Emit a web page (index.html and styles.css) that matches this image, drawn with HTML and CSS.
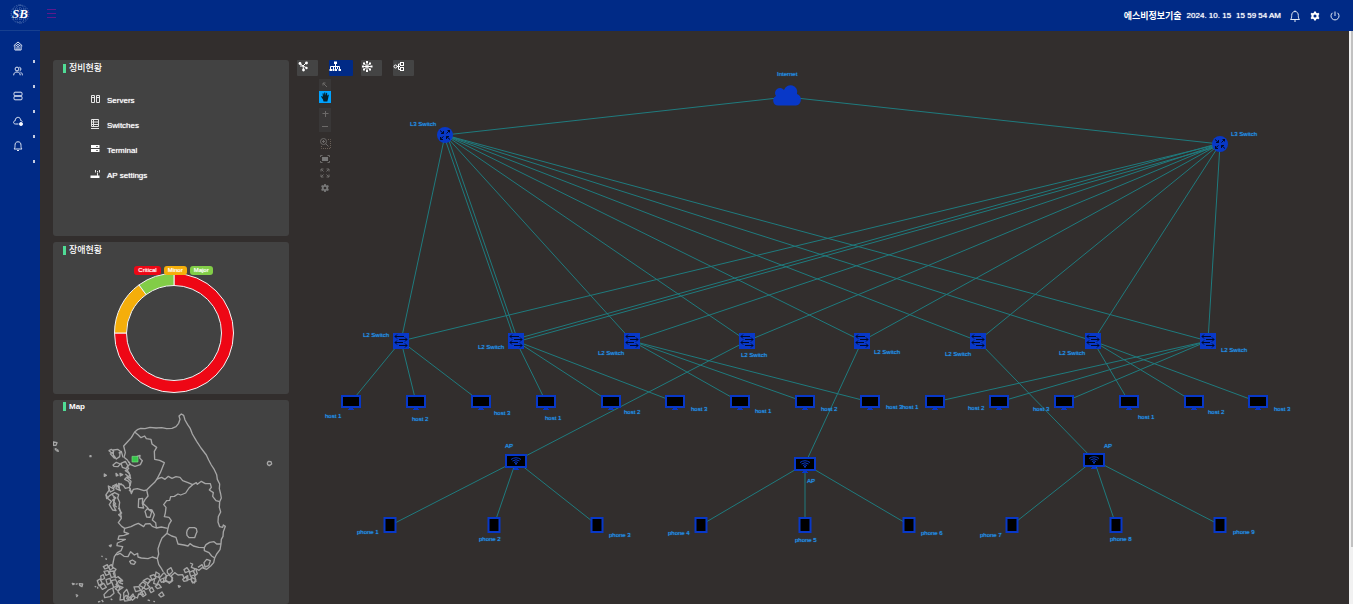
FILE: index.html
```html
<!DOCTYPE html>
<html lang="ko">
<head>
<meta charset="utf-8">
<title>Network topology</title>
<link rel="stylesheet" href="styles.css">
</head>
<body>
<header class="topbar">
  <a class="logo" href="#" aria-label="SB">
    <svg viewBox="0 0 20 20" class="logo-mark">
      <g class="globe"><circle cx="10" cy="10" r="9"/><ellipse cx="10" cy="10" rx="5" ry="9"/><path d="M10 1V19M1 10H19M3 5H17M3 15H17"/></g>
      <text x="10" y="14" text-anchor="middle">SB</text>
    </svg>
  </a>
  <button class="burger" aria-label="Menu"><svg viewBox="0 0 9 9"><path d="M0 .5H9M0 4.500H9M0 8.500H9"/></svg></button>
  <div class="status">
    <strong class="company">에스비정보기술</strong>
    <span>2024. 10. 15</span>
    <span>15 59 54 AM</span>
    <button class="top-icon" aria-label="Alerts"><svg class="line" viewBox="0 0 12 12"><path d="M1.500 9.500H10.500C9.500 8.500 9.300 7.500 9.300 5.500C9.300 3 8 1.500 6 1.500S2.700 3 2.700 5.500C2.700 7.500 2.500 8.500 1.500 9.500M5 11H7M6 .5V1.500"/></svg></button>
    <button class="top-icon" aria-label="Settings"><svg viewBox="-1 0 14 12"><use href="#gear"/></svg></button>
    <button class="top-icon" aria-label="Power"><svg class="line" viewBox="0 0 12 12"><path d="M6 1.500V6M3.500 2.800A4 4 0 1 0 8.500 2.800"/></svg></button>
  </div>
</header>
<div class="body">
  <nav class="side">
    <a href="#" aria-label="Home"><svg viewBox="0 0 10 10"><path d="M.7 4.800L5 1L9.300 4.800M1.900 4.200V9H8.100V4.200M4 9V6.500A1 1 0 0 1 6 6.500V9M3 5L5 3.300L7 5"/></svg></a>
    <a href="#" aria-label="Users"><svg viewBox="0 0 10 10"><circle cx="4" cy="3" r="1.900"/><path d="M.7 9.300C.7 7 2 6 4 6S7.200 7 7.200 9.300M6.300 1.200A1.900 1.900 0 0 1 6.600 4.900M7.500 6.200C8.800 6.700 9.400 7.800 9.400 9.300"/></svg></a>
    <a href="#" aria-label="Devices"><svg viewBox="0 0 10 10"><rect x="1" y="1.200" width="8" height="3.600" rx="1"/><rect x="1" y="5.200" width="8" height="3.600" rx="1"/></svg></a>
    <a href="#" aria-label="Cloud"><svg viewBox="0 0 10 10"><path d="M5.500 8H2.500C0 8 0 5 2.200 4.700C2.200 0 8 .5 7.700 4.500C8.500 4.600 9.200 5 9.400 5.600"/><circle class="solid" cx="8" cy="8" r="1.600"/></svg></a>
    <a href="#" aria-label="Alarms"><svg viewBox="0 0 10 10"><path d="M1 8H9C8 7 8 6 8 4.500C8 2 7 .8 5 .8S2 2 2 4.500C2 6 2 7 1 8M4 9.500H6"/></svg></a>
  </nav>
  <main class="main">
    <div class="panels">
      <section class="card card-menu">
        <h2>정비현황</h2>
        <ul class="menu">
          <li><a href="#"><svg viewBox="0 0 10 10"><path d="M1.500 1.500H4.500V8.500H1.500ZM6.500 1.500H9.500V8.500H6.500ZM1.500 3.500H4M6.500 3.500H9"/></svg>Servers</a></li>
          <li><a href="#"><svg viewBox="0 0 10 10"><path d="M1.500 .5H8.500V7.500H1.500ZM1.500 3H8.500M1.500 5.500H8.500M1 9.500H9M3.500 1V8"/></svg>Switches</a></li>
          <li><a href="#"><svg viewBox="0 0 10 10"><path class="solid" d="M1 1H9.500V4H1ZM1 5H9.500V8H1Z"/><path class="cut" d="M6 2.500H8M6 6.500H8"/></svg>Terminal</a></li>
          <li><a href="#"><svg viewBox="0 0 10 10"><path class="solid" d="M.5 6.500H9.500V9H.5Z"/><path d="M7.500 7V3.500M5.500 1V3.500M9.500 1V3.500M7 2.500H8"/></svg>AP settings</a></li>
        </ul>
      </section>
      <section class="card card-fault">
        <h2>장애현황</h2>
        <div class="chart">
          <ul class="legend"><li class="critical">Critical</li><li class="minor">Minor</li><li class="major">Major</li></ul>
          <svg class="donut" viewBox="-60 -60 120 120">
            <path class="critical" d="M0 -59.500A59.500 59.500 0 1 1 -59.500 0H-47.500A47.500 47.500 0 1 0 0 -47.500Z"/>
            <path class="minor" d="M-59.500 0A59.500 59.500 0 0 1 -35 -48.100L-27.900 -38.400A47.500 47.500 0 0 0 -47.500 0Z"/>
            <path class="major" d="M-35 -48.100A59.500 59.500 0 0 1 0 -59.500V-47.500A47.500 47.500 0 0 0 -27.900 -38.400Z"/>
          </svg>
        </div>
      </section>
      <section class="card card-map">
        <h2>Map</h2>
        <svg class="map" viewBox="9 6 708 612" aria-label="Map">
          <path d="M254 102L262 95L272 91L285 92L300 88L318 90L335 89L350 92L366 91L378 86L386 76L390 64L387 54L394 48L401 52L405 66L413 80L421 92L427 108L440 130L453 150L469 171L476 186L484 201L493 215L500 230L502 244L509 258L508 272L512 288L514 300L509 311L508 328L512 342L505 356L504 372L509 386L518 388L520 381L526 385L520 401L519 415L514 424L513 438L510 455L500 468L494 480L491 494L482 504L470 514L456 509L447 517L437 512L442 527L434 534L438 550L428 555L422 543L414 546L413 533L402 540L398 530L384 531L374 524L364 533L368 548L358 556L350 548L340 553L342 540L328 546L321 560L311 556L314 542L300 548L292 560L300 568L288 574L279 568L274 580L280 590L266 588L262 600L248 594L240 607L230 602L236 588L230 574L221 585L222 604L210 606L212 590L204 582L210 568L198 560L207 548L218 549L205 536L196 540L190 526L198 514L187 507L190 490L193 476L202 464L213 458L218 446L201 443L202 435L216 429L226 424L204 424L207 414L222 412L236 407L222 402L224 391L215 385L205 374L214 361L211 340L207 327L209 313L203 300L206 290L194 284L180 292L170 302L168 290L178 276L175 264L190 272L196 262L208 269L206 256L220 262L226 271L238 268L240 260L236 250L224 244L232 236L242 241L238 226L226 218L236 212L232 206L240 198L232 186L222 178L226 164L221 144L232 132L244 119Z"/>
          <path d="M254 102L264 110L273 119L284 114L289 122L303 124L306 138L320 148L313 160L314 184L329 187L343 194L337 209L331 224L321 243L314 253L302 264L290 276L282 278L262 272L250 274L244 287L240 270"/>
          <path d="M321 243L335 238L345 244L355 235L366 241L378 236L390 238L398 248L414 254L428 260L439 254L442 259L454 250L466 257L481 257L484 268L478 276L490 284L488 295L498 308L509 311"/>
          <path d="M428 260L417 270L407 285L392 291L384 288L373 295L362 296L359 307L350 308L341 320L348 328L346 345L343 356L357 358L364 368L357 379L354 391L351 406L365 414L378 418L384 438L402 441L414 444L420 437L430 444L446 448L463 449L468 440L479 433L492 431L500 438L513 438M463 449L463 458L477 464L485 474L494 480"/>
          <path d="M290 276L294 294L285 305L279 316L290 326L297 334L306 336L313 350L307 366L317 374L319 390L307 385L300 377L286 378L281 386L265 376L255 380L243 386L224 391M266 303L278 301L277 316L281 330L265 328ZM285 340L292 332L305 341L300 358L290 357ZM319 390L334 387L353 391"/>
          <path d="M351 406L336 420L330 434L324 452L326 468L322 482L326 499L334 511L340 522M322 482L307 477L294 482L274 480L264 477L263 466L253 471L242 461L234 476L222 475L210 466L202 470L195 470"/>
          <path d="M235 190L242 200L255 205L271 200L277 188L269 180L270 172L260 176M410 404L412 396L418 389L433 389L439 392L441 401L438 408L434 419L417 419L411 412ZM239 490L247 486L257 492L252 499L243 497ZM652 195L655 190L663 191L665 198L658 203L653 200Z"/>
          <path d="M177 158L184 154L191 160L186 166ZM190 156L203 154L211 160L209 176L199 183L190 171ZM189 201L199 193L211 198L204 206L192 205ZM213 196L226 190L234 204L228 212L217 208ZM180 166L194 182M206 166L214 160L219 178M198 226L204 232L199 234ZM210 226L218 230L211 234ZM163 228L169 232L163 235ZM10 132L21 134L18 142L11 142ZM14 154L18 152L18 158M19 158L25 160L22 154M120 173H123V176H120Z"/>
          <path d="M168 290L174 302L184 310L178 320L188 336L198 338L190 322L197 318L188 306L198 300L187 292M175 268L181 282L192 276L188 264L200 258L198 272L211 278L203 262L216 258M186 286L194 304L190 318L200 328M205 330L215 345L206 350L214 358M232 216L240 232L232 240L243 250L240 264M226 228L236 236M238 268L244 282L237 276"/>
          <path d="M178 443L184 441L182 446ZM154 474L158 476M166 482L171 484M160 506L172 500L175 509L165 513ZM176 505L184 500L190 510L180 516ZM162 520L174 518L178 528L168 532ZM178 520L193 519L196 535L184 539ZM152 534L160 530L164 541L154 546ZM142 548L150 543L157 556L147 563ZM150 564L161 556L169 568L157 574ZM168 545L180 541L183 554L172 560ZM184 548L197 545L205 562L191 568ZM175 576L188 570L192 586L180 596L164 599L162 590ZM196 572L207 564L219 568L204 578ZM205 538L216 546L208 554L219 558M134 565L139 567M143 566V572M67 556L73 558L69 560ZM77 559L83 557M88 557L98 558L96 566L89 562ZM77 590L83 592L79 597M144 612L151 610M155 606L160 612M182 602L187 606"/>
          <path d="M252 567L266 566L272 577L257 581ZM268 562L278 552L287 558L282 570ZM280 548L292 541L302 546L294 556ZM300 534L312 530L318 540L307 546ZM318 522L328 528L326 538L316 534ZM328 540L342 524L350 534L346 548L334 553ZM352 516L363 509L368 520L359 530L352 524ZM345 538L356 530L368 540L362 552L349 551ZM270 585L282 578L288 590L279 596ZM298 575L306 568L312 579L303 584ZM316 565L326 558L334 568L322 572ZM326 590L336 582L342 592L333 597ZM221 600L228 592L238 598L234 608L224 609ZM240 598L249 588L255 600L247 607ZM385 563L391 565L387 568ZM293 606L300 608M310 610L315 611M398 544L409 536L412 548L402 550ZM418 523L429 518L436 530L422 535ZM420 495L428 498L424 508L434 512L430 524M402 515L411 509L418 519L406 524ZM424 538L437 544L433 555L425 550ZM462 494L470 484L481 488L476 503L465 507ZM444 508L456 500L462 512"/>
          <rect class="pin" x="246" y="175" width="18" height="17"/>
        </svg>
      </section>
    </div>
    <section class="stage">
      <svg class="topology" viewBox="297 60 1052 544" aria-label="Topology">
        <defs>
          <path id="gear" d="M5 .8H7L7.400 2.200L8.600 2.800L9.900 2.100L11.200 3.800L10.200 4.900V7.100L11.200 8.200L9.900 9.900L8.600 9.200L7.400 9.800L7 11.200H5L4.600 9.800L3.400 9.200L2.100 9.900L.8 8.200L1.800 7.100V4.900L.8 3.800L2.100 2.100L3.400 2.800L4.600 2.200ZM6 4.200A1.800 1.800 0 1 0 6 7.800A1.800 1.800 0 1 0 6 4.200Z" fill-rule="evenodd"/>
          <g id="l3"><circle class="fill" r="8"/><path class="mark" d="M-5 -4.500L-1.500 -1.500M-1.500 -4V-1.500H-4M1.500 -1.500L5 -5M2.500 -4.500H4.500V-2.500M-5 4.500L-1.500 1.500M-4.500 2V4.500H-2M5 4.500L1.500 1.500M1.500 4V1.500H4"/></g>
          <g id="l2"><rect class="fill" x="-8" y="-8" width="16" height="16"/><path class="mark" d="M-6 -4.500H3M-4 -6.500L-6 -4.500L-4 -2.500M-2 -1.500H6M4 -3.500L6 -1.500L4 .5M-6 1.500H2M-4 -.5L-6 1.500L-4 3.500M-2 4.500H6M4 2.500L6 4.500L4 6.500"/></g>
          <g id="host"><rect class="screen" x="-9" y="-6" width="18" height="11"/><path class="fill" d="M-2 6H2V7H3V8H-3V7H-2Z"/></g>
          <g id="ap"><rect class="screen" x="-10" y="-6" width="20" height="12"/><path class="fill" d="M-2 6H2V8H3V9H-3V8H-2Z"/><path class="wifi" d="M-5 -1.500Q0 -5 5 -1.500M-3.500 0Q0 -2.500 3.500 0M-2 1.500Q0 0 2 1.500"/><circle class="fill" cy="2.800" r="1"/></g>
          <g id="phone"><rect class="screen" x="-5.500" y="-7" width="11" height="14"/></g>
        </defs>
        <path class="links" d="M787 97L445 135M787 97L1220 144M445 135L401 341M444 136L515 341M447 135L518 341M445 135L632 341M445 135L747 341M445 135L862 341M445 135L978 341M445 135L1093 341M445 135L1208 341M1220 144L401 341M1220 143L516 339M1220 146L516 342M1220 144L632 341M1220 144L747 341M1220 144L862 341M1220 144L978 341M1220 144L1093 341M1220 144L1208 341
        M401 341L351 402M401 341L416 402M401 341L481 402M516 341L546 402M516 341L610 402M516 341L675 402M632 341L740 402M632 341L805 402M632 341L870 402M1208 341L935 402M1208 341L999 402M1208 341L1064 402M1093 341L1129 402M1093 341L1194 402M1093 341L1258 402
        M747 341L516 461M862 341L805 464M978 341L1094 460M516 461L391 525M516 461L494 525M516 461L597 525M805 464L701 525M805 464V525M805 464L909 525M1094 460L1012 525M1094 460L1116 525M1094 460L1220 525"/>
        <path class="fill" d="M778 105.500A5 5 0 0 1 776 96A5 5 0 0 1 784 90A6.500 6.500 0 0 1 797 94A6 6 0 0 1 796 105.500Z"/>
        <use href="#l3" x="445" y="135"/><use href="#l3" x="1220" y="144"/>
        <use href="#l2" x="401" y="341"/><use href="#l2" x="516" y="341"/><use href="#l2" x="632" y="341"/><use href="#l2" x="747" y="341"/><use href="#l2" x="862" y="341"/><use href="#l2" x="978" y="341"/><use href="#l2" x="1093" y="341"/><use href="#l2" x="1208" y="341"/>
        <use href="#host" x="351" y="402"/><use href="#host" x="416" y="402"/><use href="#host" x="481" y="402"/><use href="#host" x="546" y="402"/><use href="#host" x="611" y="402"/><use href="#host" x="675" y="402"/><use href="#host" x="740" y="402"/><use href="#host" x="805" y="402"/><use href="#host" x="870" y="402"/><use href="#host" x="935" y="402"/><use href="#host" x="999" y="402"/><use href="#host" x="1064" y="402"/><use href="#host" x="1129" y="402"/><use href="#host" x="1194" y="402"/><use href="#host" x="1258" y="402"/>
        <use href="#ap" x="516" y="461"/><use href="#ap" x="805" y="464"/><use href="#ap" x="1094" y="460"/>
        <use href="#phone" x="390" y="525"/><use href="#phone" x="494" y="525"/><use href="#phone" x="597" y="525"/><use href="#phone" x="701" y="525"/><use href="#phone" x="805" y="525"/><use href="#phone" x="909" y="525"/><use href="#phone" x="1012" y="525"/><use href="#phone" x="1116" y="525"/><use href="#phone" x="1220" y="525"/>
        <g class="labels">
          <text x="777" y="76">Internet</text>
          <text x="410" y="126">L3 Switch</text><text x="1231" y="136">L3 Switch</text>
          <text x="363" y="337">L2 Switch</text><text x="478" y="349">L2 Switch</text><text x="598" y="355">L2 Switch</text><text x="741" y="357">L2 Switch</text><text x="874" y="354">L2 Switch</text><text x="945" y="356">L2 Switch</text><text x="1059" y="355">L2 Switch</text><text x="1221" y="352">L2 Switch</text>
          <text x="325" y="418">host 1</text><text x="412" y="421">host 2</text><text x="494" y="415">host 3</text><text x="545" y="420">host 1</text><text x="624" y="414">host 2</text><text x="691" y="411">host 3</text><text x="755" y="413">host 1</text><text x="821" y="411">host 2</text><text x="886" y="409">host 3</text><text x="902" y="409">host 1</text><text x="968" y="410">host 2</text><text x="1033" y="411">host 3</text><text x="1138" y="419">host 1</text><text x="1208" y="414">host 2</text><text x="1274" y="411">host 3</text>
          <text x="505" y="448">AP</text><text x="807" y="483">AP</text><text x="1104" y="448">AP</text>
          <text x="357" y="534">phone 1</text><text x="479" y="541">phone 2</text><text x="609" y="537">phone 3</text><text x="668" y="535">phone 4</text><text x="795" y="542">phone 5</text><text x="921" y="535">phone 6</text><text x="980" y="537">phone 7</text><text x="1110" y="541">phone 8</text><text x="1233" y="534">phone 9</text>
        </g>
      </svg>
      <div class="tools">
        <div class="layouts">
          <button aria-label="Force layout"><svg viewBox="0 0 12 12"><path d="M3 3.500L6 6L9.500 2.500M6 6L6.500 9.500M6 6L9 7.500M3 6L6 6"/><circle class="solid" cx="3" cy="3.500" r="1.400"/><circle class="solid" cx="9.500" cy="3" r="1.400"/><circle class="solid" cx="6.500" cy="10" r="1.400"/><circle class="solid" cx="9.500" cy="8" r="1.200"/></svg></button>
          <button class="active" aria-label="Tree layout"><svg viewBox="0 0 12 12"><path d="M6.500 3V9M1.500 9V6.500H10.500V9M4.500 6.500V9M8.500 6.500V9"/><path class="solid" d="M5 1.500H8V4H5ZM.5 9H3V11H.5ZM3.500 9H5.500V11H3.500ZM6 9H8V11H6ZM9.500 9H12V11H9.500Z"/></svg></button>
          <button aria-label="Radial layout"><svg viewBox="0 0 12 12"><path d="M6 2V11M1.500 6.500H10.500M3 3.500L9 9.500M9 3.500L3 9.500"/><path class="solid" d="M5 1H7V3H5ZM5 10H7V12H5ZM1 5.500H3V7.500H1ZM9.500 5.500H11.500V7.500H9.500ZM2 2.500H4V4.500H2ZM8 2.500H10V4.500H8ZM2 8.500H4V10.500H2ZM8 8.500H10V10.500H8Z"/></svg></button>
          <button aria-label="Horizontal layout"><svg viewBox="0 0 12 12"><path d="M4 6.500H7M5.500 6.500V4H7M5.500 6.500V9.500H7"/><circle cx="2.500" cy="6.500" r="1.500"/><rect x="7.500" y="2.500" width="3" height="3"/><rect x="7.500" y="7.500" width="3" height="3"/></svg></button>
        </div>
        <div class="modes">
          <button aria-label="Select"><svg viewBox="0 0 12 12"><path d="M4 4L8 8M4 6.500V4H6.500"/></svg></button>
          <button class="pan" aria-label="Pan"><svg viewBox="0 0 12 12"><path d="M4.500 10.500L4 8.500L2 5.500L3 5L4 6L3.500 2.500L4.500 2.200L5 4.500L5.300 1.500H6.300L6.500 4.500L7.300 1.800L8.200 2L8 5L9 3.500L9.800 4L9 8L8.300 10.500Z"/></svg></button>
        </div>
        <div class="zooms">
          <button aria-label="Zoom in"><svg viewBox="0 0 12 12"><path d="M6.500 3V9M3.500 5.500H9.500"/></svg></button>
          <button aria-label="Zoom out"><svg viewBox="0 0 12 12"><path d="M3 6.500H9"/></svg></button>
        </div>
        <div class="views">
          <button aria-label="Zoom to area"><svg viewBox="0 0 12 12"><circle cx="4.500" cy="4.500" r="3"/><path d="M3 4.500H6M4.500 3V6M6.700 6.700L9.500 9.500"/><path class="dash" d="M9 2.500H11.500V11.500H2.500V8"/></svg></button>
          <button aria-label="Fit"><svg viewBox="0 0 12 12"><path d="M1.500 5V3.500H3.500M8.500 3.500H10.500V5M1.500 9V10.500H3.500M8.500 10.500H10.500V9"/><rect class="solid" x="3" y="5" width="6" height="4"/></svg></button>
          <button aria-label="Full screen"><svg viewBox="0 0 12 12"><path d="M2 4.500V2H4.500M2 2L4.500 4.500M7.500 2H10V4.500M10 2L7.500 4.500M2 7.500V10H4.500M2 10L4.500 7.500M10 7.500V10H7.500M10 10L7.500 7.500"/></svg></button>
          <button aria-label="Options"><svg viewBox="-2 -2 16 16"><use class="solid" href="#gear"/></svg></button>
        </div>
      </div>
    </section>
  </main>
  <div class="scroll"><div class="thumb"></div></div>
</div>
</body>
</html>
```
FILE: styles.css
```css
* { box-sizing: border-box; }
body {
  margin: 0;
  height: 100vh;
  overflow: hidden;
  display: flex;
  flex-direction: column;
  background: #322e2d;
  color: #fff;
  font: 8px/10px "Liberation Sans", "Noto Sans CJK KR", sans-serif;
}
button { padding: 0; border: 0; background: none; color: inherit; font: inherit; display: grid; }
a { color: inherit; text-decoration: none; }
ul { margin: 0; padding: 0; list-style: none; }
svg { display: block; }

.topbar { flex: none; height: 31px; display: flex; align-items: center; background: #002a86; }
.logo { width: 40px; height: 31px; display: grid; place-items: center; padding-bottom: 3px; border-bottom: 1px solid #17408f; }
.logo-mark { width: 20px; height: 20px; }
.logo-mark text { font: italic bold 13px "Liberation Serif", serif; fill: #fff; }
.globe { fill: none; stroke: #4c6eb0; stroke-width: 1; stroke-dasharray: 1 1; }
.burger { margin: 0 auto 4px 7px; }
.burger svg { width: 9px; height: 9px; stroke: #5c1a8c; fill: none; }
.status { display: flex; align-items: center; gap: 5px; padding-right: 12px; text-shadow: 0 0 1px #fff; }
.company { font-size: 9px; text-shadow: none; }
.top-icon { margin-left: 3px; }
.top-icon svg { width: 12px; height: 12px; fill: #fff; }
.top-icon .line { fill: none; stroke: #e4eaf6; stroke-width: 1; }

.body { flex: 1; min-height: 0; display: flex; }
.side { flex: none; width: 40px; padding-top: 7px; background: #002a86; }
.side a { height: 25px; display: flex; align-items: flex-start; justify-content: space-between; padding: 3px 5px 0 13px; }
.side a::after { content: ""; align-self: flex-end; width: 2px; height: 3px; background: #c3cce2; }
.side svg { width: 10px; height: 10px; fill: none; stroke: #dfe6f5; stroke-width: 1; }
.side .solid { fill: #fff; }

.main { flex: 1; min-width: 0; display: flex; gap: 8px; padding: 29px 0 0 13px; }
.panels { flex: none; width: 236px; display: flex; flex-direction: column; gap: 6px; }
.card { background: #424242; border-radius: 3px; padding: 4px 10px 0; }
.card h2 {
  margin: 0;
  height: 9px;
  padding-left: 3px;
  border-left: 3px solid #50dc96;
  font: bold 8px/9px "Liberation Sans", "Noto Sans CJK KR", sans-serif;
}
.card:not(.card-map) h2 { font-size: 9px; font-weight: 500; }
.card-menu { min-height: 176px; }
.menu { padding: 15px 0 0 27px; }
.menu a { height: 25px; display: flex; align-items: center; gap: 7px; text-shadow: 0 0 1px #fff; }
.menu svg { width: 10px; height: 10px; margin-bottom: 4px; fill: none; stroke: #e6e6e6; stroke-width: 1; }
.menu .solid { fill: #fff; stroke: none; }
.menu .cut { stroke: #777; }

.card-fault { min-height: 152px; }
.chart { display: flex; flex-direction: column; align-items: center; padding: 11px 0 0 5px; }
.legend { position: relative; display: flex; gap: 3px; margin-bottom: -2px; font-size: 6px; line-height: 9px; }
.legend li { padding: 0 4px; border-radius: 3px; text-shadow: 0 0 1px #fff; }
.legend .critical { background: #ee0715; }
.legend .minor { background: #f5ae0a; }
.legend .major { background: #82cd47; }
.donut { width: 120px; height: 120px; stroke: #f4f4f4; stroke-width: 1; }
.donut .critical { fill: #ee0715; }
.donut .minor { fill: #f5ae0a; }
.donut .major { fill: #82cd47; }

.card-map { display: grid; padding: 0; }
.card-map h2, .map { grid-area: 1 / 1; }
.card-map h2 { margin: 2px 0 0 10px; }
.map { width: 100%; fill: none; stroke: #a6a6a6; stroke-width: 4; stroke-linejoin: round; }
.pin { fill: #37c84b; stroke: #7bdc87; stroke-width: 2; }

.stage { flex: 1; min-width: 0; display: grid; align-items: start; }
.topology, .tools { grid-area: 1 / 1; }
.topology { width: 100%; }
.links { fill: none; stroke: #1f7b7e; stroke-width: 1; }
.fill { fill: #0838c8; }
.screen { fill: #000; stroke: #0838c8; stroke-width: 2; }
.mark { fill: none; stroke: #020a28; stroke-width: 1; }
.wifi { fill: none; stroke: #0838c8; stroke-width: 1; }
.labels { fill: #2196f3; font: 6px "Liberation Sans", sans-serif; stroke: none; text-shadow: 0 0 1px #2196f3; }

.tools { justify-self: start; display: flex; flex-direction: column; }
.layouts { display: grid; grid-template-columns: repeat(4, 32px); justify-items: start; margin-bottom: 3px; }
.layouts button { width: 21px; height: 16px; border-radius: 1px; background: #444; align-content: start; justify-content: start; }
.layouts .active { width: 24px; background: #002a86; }
.layouts svg { width: 12px; height: 12px; fill: none; stroke: #fff; stroke-width: 1; }
.layouts .solid { fill: #fff; stroke: none; }
.modes, .zooms, .views { margin-left: 22px; width: 12px; }
.modes button, .zooms button, .modes svg, .zooms svg, .views svg { width: 12px; height: 12px; }
.modes, .zooms { background: #393737; margin-bottom: 5px; }
.modes svg, .zooms svg, .views svg { fill: none; stroke: #6c6a69; stroke-width: 1; }
.modes .pan { background: #00a2ff; }
.modes .pan svg { fill: #05202c; stroke: none; }
.views { display: grid; gap: 3px; }
.views .solid { fill: #777; stroke: none; }
.views .dash { stroke: #6a6058; stroke-dasharray: 1 1; }

.scroll { flex: none; width: 4px; padding-left: 2px; background: #f1f1f1; }
.thumb { height: 90%; background: #c1c1c1; }
```
